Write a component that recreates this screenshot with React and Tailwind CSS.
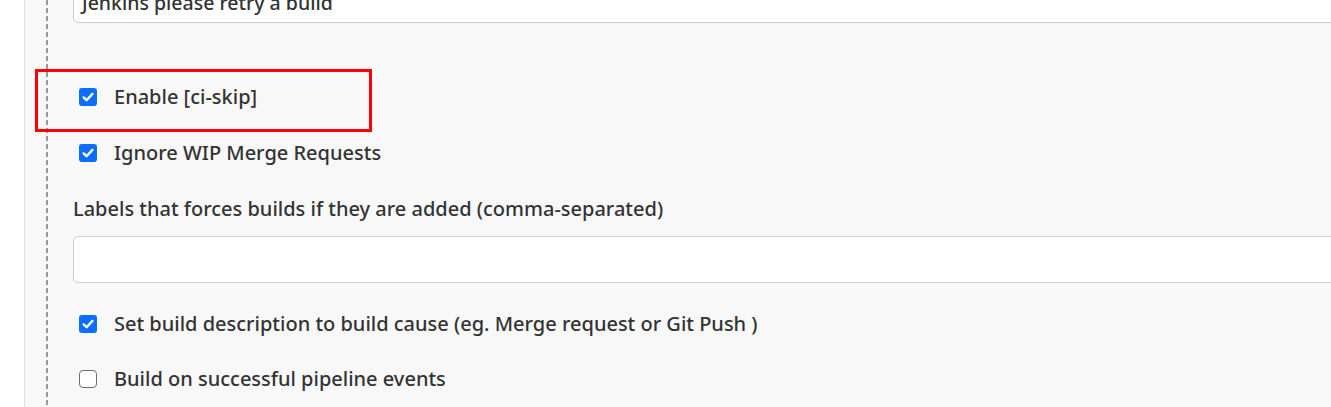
// Jenkins GitLab trigger options – advanced section excerpt

const FONT = { fontFamily: "'Noto Sans', 'Open Sans', sans-serif" }

function Check({ checked }) {
  if (!checked) {
    return <span className="w-[18px] h-[18px] shrink-0 rounded-[4px] border border-[#6e6e6e] bg-white" />
  }
  return (
    <span className="w-[18px] h-[18px] shrink-0 rounded-[3px] bg-[#0d6efd] flex items-center justify-center">
      <svg width="14" height="14" viewBox="0 0 14 14" fill="none">
        <path d="M2.6 7.4 L5.6 10.2 L11.4 3.9" stroke="white" strokeWidth="2.4" strokeLinecap="round" strokeLinejoin="round" />
      </svg>
    </span>
  )
}

function CheckRow({ checked, label, className = '' }) {
  return (
    <div className={`flex items-center h-[24px] pl-[6px] gap-[17px] ${className}`}>
      <Check checked={checked} />
      <span className="text-[20px] leading-[24px] font-medium text-[#333] whitespace-nowrap">{label}</span>
    </div>
  )
}

export default function App() {
  return (
    <div className="flex h-[407px] w-[1331px] overflow-hidden bg-white" style={FONT}>
      {/* side gutter */}
      <div className="w-[25px] shrink-0 bg-white border-r border-[#dddddd]" />

      <div className="relative flex-1 flex bg-[#f8f8f8]">
        {/* nesting guide */}
        <div className="ml-[21px] w-[2px] shrink-0 bg-[repeating-linear-gradient(to_bottom,#9a9a9a_0px,#9a9a9a_5px,transparent_5px,transparent_8px)]" />

        <div className="flex-1 flex flex-col pl-[25px] -mt-[24px]">
          <div className="h-[47px] -mr-[40px] bg-white border border-[#cccccc] rounded-[5px] pt-[14px] px-[8px] text-[19.5px] leading-[24px] font-medium text-[#333] whitespace-nowrap">
            Jenkins please retry a build
          </div>

          <CheckRow checked label="Enable [ci-skip]" className="mt-[62px]" />
          <CheckRow checked label="Ignore WIP Merge Requests" className="mt-[32px]" />

          <div className="mt-[32px] h-[24px] text-[20px] leading-[24px] font-medium text-[#333] whitespace-nowrap">
            Labels that forces builds if they are added (comma-separated)
          </div>
          <div className="mt-[15px] h-[47px] -mr-[40px] bg-white border border-[#cccccc] rounded-[5px]" />

          <CheckRow checked label="Set build description to build cause (eg. Merge request or Git Push )" className="mt-[29px]" />
          <CheckRow checked={false} label="Build on successful pipeline events" className="mt-[31px]" />
        </div>

        {/* highlight annotation */}
        <div className="absolute left-[10px] top-[69px] w-[337px] h-[63px] border-[3px] border-[#ff0000]" />
      </div>
    </div>
  )
}
